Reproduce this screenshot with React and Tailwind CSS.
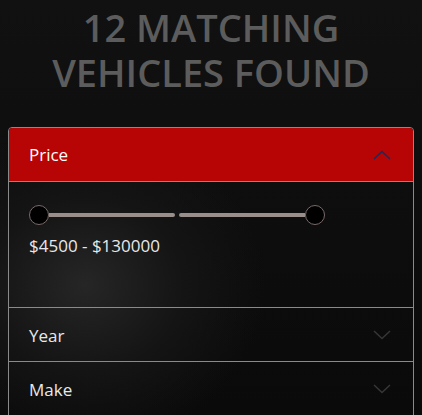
import React from "react";

function Chevron({ up, color }) {
  return (
    <svg width="18" height="10" viewBox="0 0 18 10" fill="none">
      <path
        d={up ? "M1 9 L9 1.5 L17 9" : "M1 1 L9 8.5 L17 1"}
        stroke={color}
        strokeWidth="1.5"
      />
    </svg>
  );
}

export default function App() {
  return (
    <div
      className="w-[422px] h-[415px] overflow-hidden bg-[#0b0b0c] px-2 pt-[4px]"
      style={{
        fontFamily: "'Open Sans', 'Noto Sans', sans-serif",
        backgroundImage:
          "radial-gradient(ellipse 180px 160px at 85px 285px, #262626 0%, #141414 55%, rgba(10,10,11,0) 100%), linear-gradient(180deg, #111111 0%, #0a0a0b 100%)",
      }}
    >
      <h1 className="text-center text-[#5c5c5c] text-[38px] leading-[45px] font-semibold pt-[1px]">
        12 MATCHING
        <br />
        VEHICLES FOUND
      </h1>
      <div className="mt-[32px] rounded-t-[4px] border border-[#8a8a8a] overflow-hidden">
        <div className="h-[54px] bg-[#b70404] border-b border-[#8a8a8a] flex items-center justify-between pl-5 pr-[22px]">
          <span className="text-white text-[17px]">Price</span>
          <Chevron up color="#1d2a5a" />
        </div>
        <div className="h-[126px] pt-[23px] pl-5 border-b border-[#8a8a8a]">
          <div className="flex items-center w-[296px]">
            <div className="w-[20px] h-[20px] rounded-full bg-black border border-[#7a6a6a] shrink-0" />
            <div className="h-[4px] w-[126px] bg-[#9a8e8b] rounded-r-full" />
            <div className="w-[4px]" />
            <div className="h-[4px] w-[126px] bg-[#9a8e8b] rounded-l-full" />
            <div className="w-[20px] h-[20px] rounded-full bg-black border border-[#7a6a6a] shrink-0" />
          </div>
          <div className="text-[#e8e8e8] text-[17px] mt-[8px]">$4500 - $130000</div>
        </div>
        <div className="h-[54px] border-b border-[#8a8a8a] flex items-center justify-between pl-5 pr-[22px]">
          <span className="text-[#e8e8e8] text-[17px] pt-[3px]">Year</span>
          <Chevron color="#363636" />
        </div>
        <div className="h-[54px] flex items-center justify-between pl-5 pr-[22px]">
          <span className="text-[#e8e8e8] text-[17px] pt-[1px]">Make</span>
          <Chevron color="#363636" />
        </div>
      </div>
    </div>
  );
}
